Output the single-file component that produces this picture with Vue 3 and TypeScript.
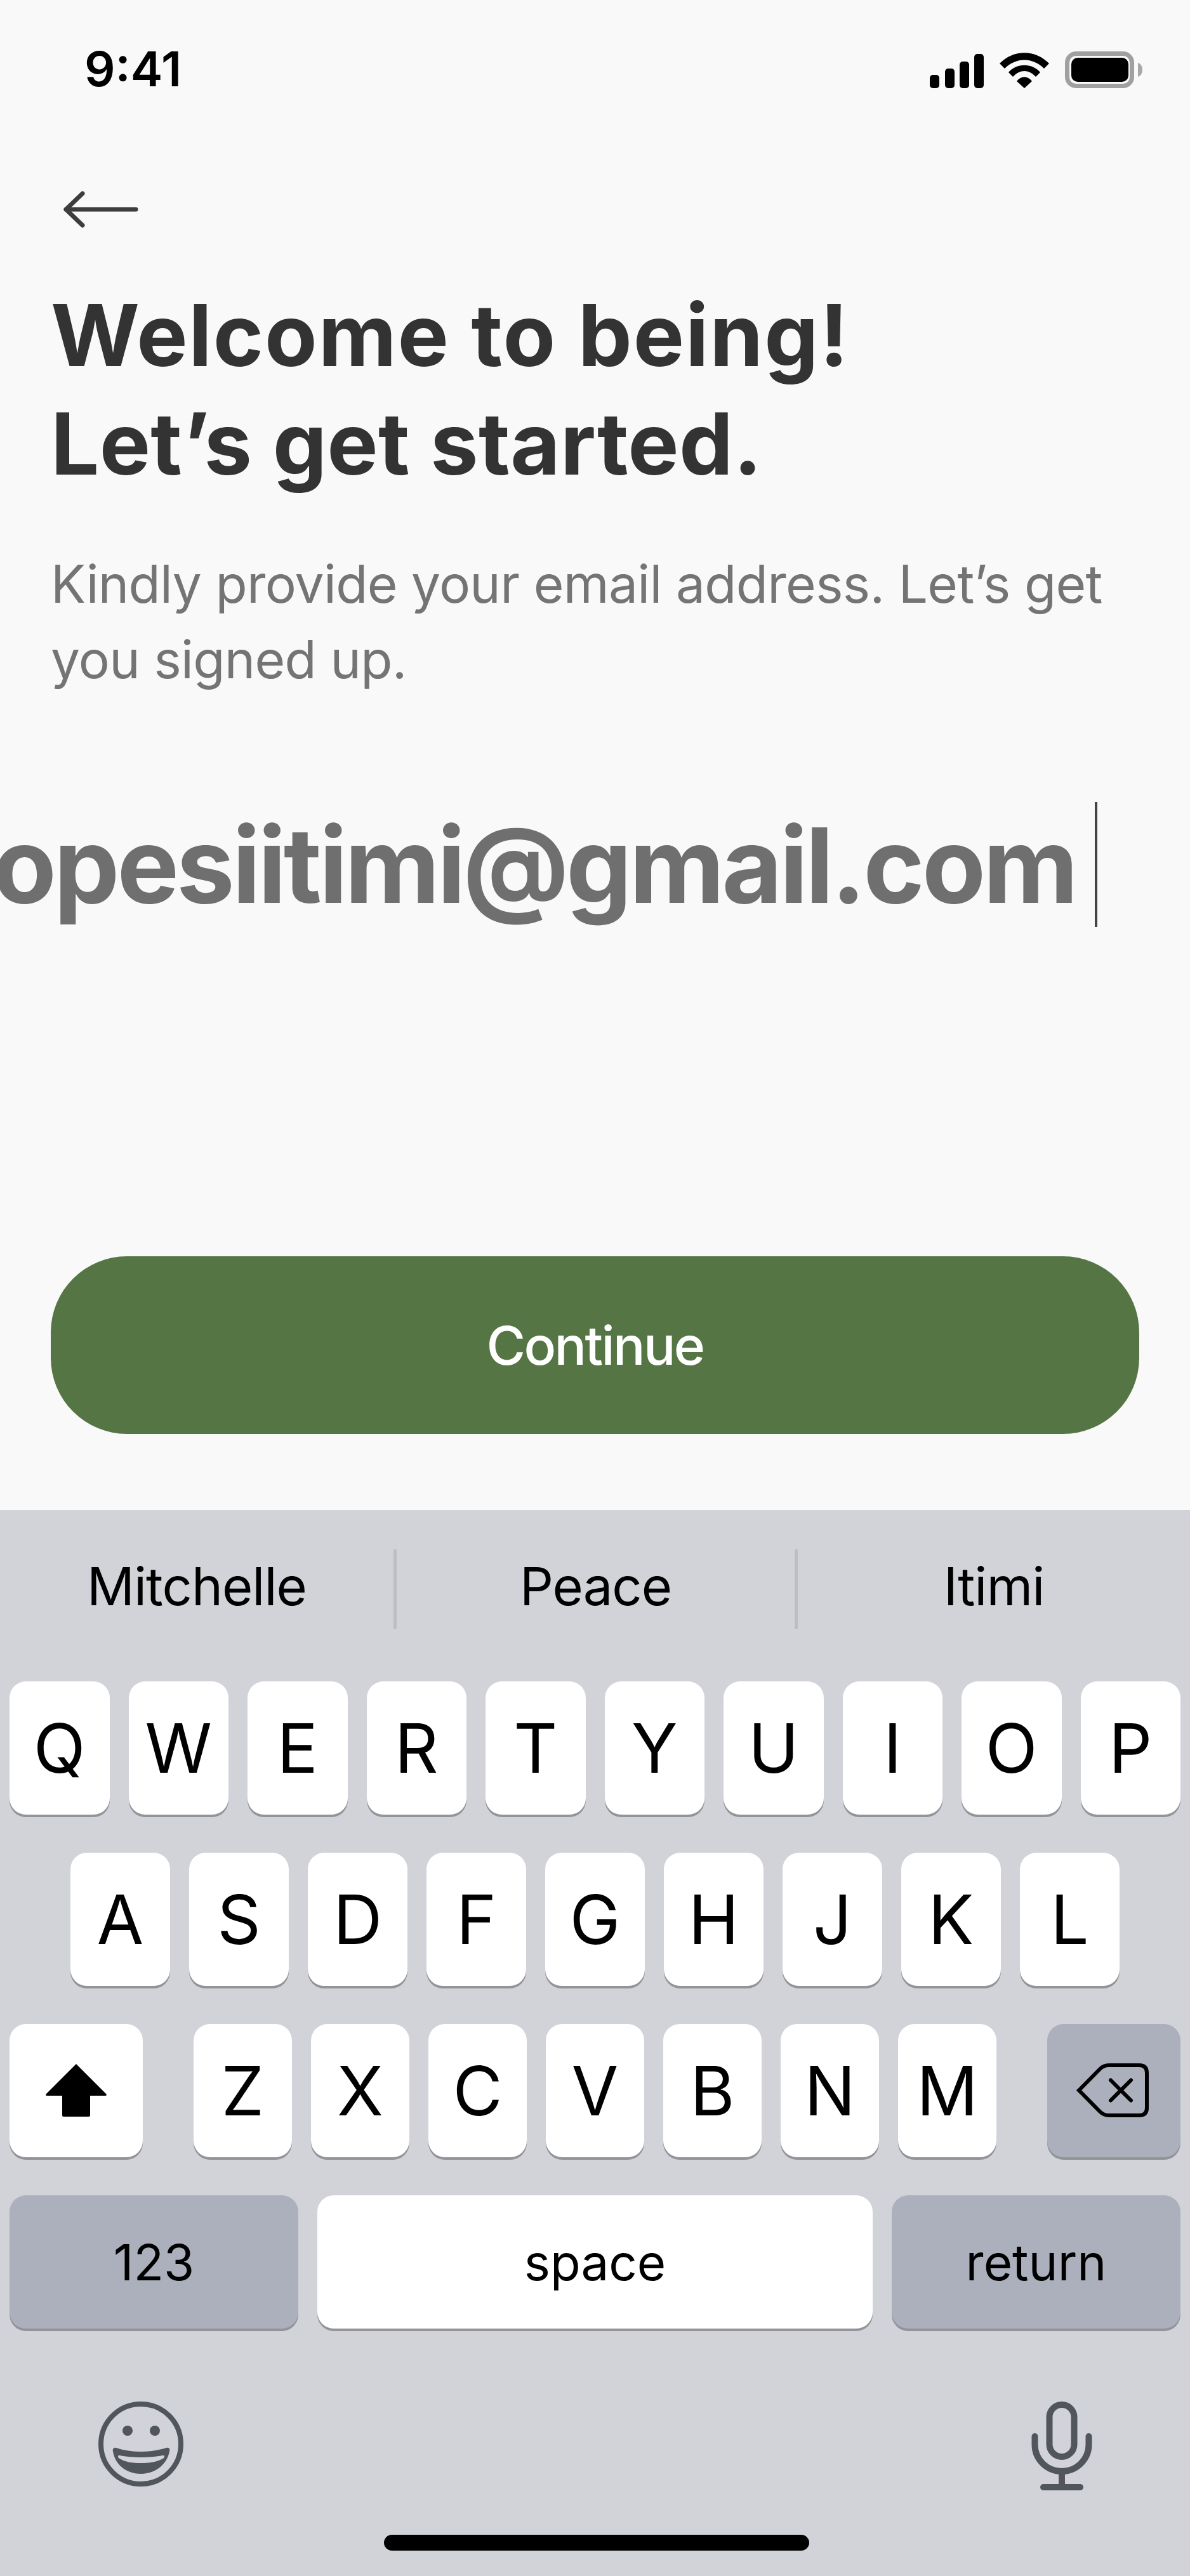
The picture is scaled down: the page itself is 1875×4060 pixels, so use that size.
<template>
  <div class="phone">
    <section class="screen">
      <!-- Status bar -->
      <div class="status-bar">
        <span class="time">9:41</span>
        <div class="status-icons">
          <svg width="85" height="54" viewBox="0 0 85 54" fill="#000">
            <rect x="0" y="33" width="15" height="21" rx="5" />
            <rect x="24" y="23" width="15" height="31" rx="5" />
            <rect x="47" y="12" width="15" height="42" rx="5" />
            <rect x="70" y="0" width="15" height="54" rx="5" />
          </svg>
          <svg width="78" height="56" viewBox="0 0 78 56" fill="#000">
            <path d="M0 17C22-5.500 56-5.500 78 17L70 25C52 7 26 7 8 25Z" />
            <path d="M14 31C27 16 51 16 64 31L57 38C46 26 32 26 21 38Z" />
            <path d="M27 45C34 36 44 36 51 45L39 56Z" />
          </svg>
          <svg width="122" height="58" viewBox="0 0 122 58">
            <rect x="3.500" y="3.500" width="102" height="51" rx="14" fill="none" stroke="#a0a0a0" stroke-width="7" />
            <rect x="10" y="10" width="90" height="38" rx="10" fill="#000" />
            <path d="M115 18C120 20 122 24 122 29C122 34 120 38 115 40Z" fill="#a8a8a8" />
          </svg>
        </div>
      </div>

      <!-- Back arrow -->
      <svg class="back-arrow" width="120" height="58" viewBox="0 0 120 58" fill="none" stroke="#3d3d3d" stroke-width="7" stroke-linecap="round" stroke-linejoin="round">
        <path d="M4 29H114" />
        <path d="M30 4L4 29L30 54" />
      </svg>

      <h1 class="title">Welcome to being!<br /><span class="title-second">Let’s get started.</span></h1>
      <p class="subtitle">Kindly provide your email address. Let’s get you signed up.</p>

      <!-- Email field, scrolled to the caret -->
      <div class="email-field">
        <span class="email-text">hopesiitimi@gmail.com</span>
        <span class="caret"></span>
      </div>

      <button class="continue-btn">Continue</button>
    </section>

    <section class="keyboard">
      <!-- Predictions -->
      <div class="suggestions">
        <span v-for="(word, index) in suggestions" :key="word" class="suggestion" :class="{ divided: index > 0 }">
          {{ word }}
        </span>
      </div>

      <div class="key-rows">
        <div class="key-row top-row">
          <div v-for="letter in topRow" :key="letter" class="key letter-key">{{ letter }}</div>
        </div>
        <div class="key-row middle-row">
          <div v-for="letter in middleRow" :key="letter" class="key letter-key">{{ letter }}</div>
        </div>
        <div class="key-row bottom-row">
          <div class="key shift-key">
            <svg width="96" height="84" viewBox="0 0 96 84" fill="#000">
              <path d="M48 0L95 47Q97 50 94 50H70V81Q70 83 68 83H28Q26 83 26 81V50H2Q-1 50 1 47Z" />
            </svg>
          </div>
          <div class="letters">
            <div v-for="letter in bottomRow" :key="letter" class="key letter-key">{{ letter }}</div>
          </div>
          <div class="key function-key delete-key">
            <svg width="120" height="92" viewBox="0 0 120 92" fill="none" stroke="#000" stroke-width="6" stroke-linecap="round">
              <path d="M5 45.500L38 12Q44 6 52 6H100Q112 6 112 18V73Q112 85 100 85H52Q44 85 38 79Z" />
              <path d="M55 29.500L87 61.500M87 29.500L55 61.500" />
            </svg>
          </div>
        </div>
        <div class="key-row action-row">
          <div class="key function-key wide-key label-key">123</div>
          <div class="key space-key label-key">space</div>
          <div class="key function-key wide-key label-key">return</div>
        </div>
      </div>

      <div class="system-icons">
        <svg width="140" height="140" viewBox="0 0 140 140">
          <circle cx="70" cy="70" r="63" fill="none" stroke="#51565c" stroke-width="8" />
          <circle cx="49" cy="49" r="8" fill="#51565c" />
          <circle cx="92" cy="49" r="8" fill="#51565c" />
          <path d="M31 76C55 84 85 84 110 76C115 75 116 78 115 82C110 105 90 117 70 117C50 117 30 105 26 82C25 78 27 75 31 76Z" fill="#51565c" />
          <path d="M37 88C55 92 85 92 104 88C107 87 108 90 106 92C95 99 82 100 70 100C58 100 45 99 35 92C33 90 34 87 37 88Z" fill="#d1d3d9" />
        </svg>
        <svg width="100" height="146" viewBox="0 0 100 146" fill="none" stroke="#51565c" stroke-width="10" stroke-linecap="round">
          <rect x="30.500" y="8" width="39" height="82" rx="19.500" />
          <path d="M7.500 58V71A42.500 42 0 0 0 92.500 71V58" />
          <path d="M50 113V138" />
          <path d="M21 138H79" />
        </svg>
      </div>

      <div class="home-indicator"></div>
    </section>
  </div>
</template>

<script setup lang="ts">
const suggestions: string[] = ['Mitchelle', 'Peace', 'Itimi'];
const topRow: string[] = ['Q', 'W', 'E', 'R', 'T', 'Y', 'U', 'I', 'O', 'P'];
const middleRow: string[] = ['A', 'S', 'D', 'F', 'G', 'H', 'J', 'K', 'L'];
const bottomRow: string[] = ['Z', 'X', 'C', 'V', 'B', 'N', 'M'];
</script>

<style>
html,
body {
  margin: 0;
  background: #f9f9f9;
}
</style>

<style scoped>
.phone {
  width: 1875px;
  height: 4060px;
  display: flex;
  flex-direction: column;
  overflow: hidden;
  font-family: Inter, "Liberation Sans", sans-serif;
}

/* Upper screen */
.screen {
  height: 2380px;
  flex: none;
  display: flex;
  flex-direction: column;
  background: #f9f9f9;
  box-sizing: border-box;
}

.status-bar {
  display: flex;
  justify-content: space-between;
  align-items: flex-start;
  padding: 81px 75px 0 133px;
  height: 220px;
  box-sizing: border-box;
}

.time {
  font-size: 76px;
  font-weight: 600;
  line-height: 54px;
  color: #000;
}

.status-icons {
  display: flex;
  align-items: flex-end;
  gap: 25px;
}

.back-arrow {
  margin: 81px 0 0 100px;
  flex: none;
}

.title {
  margin: 84px 0 0 80px;
  font-size: 135px;
  line-height: 171px;
  font-weight: 700;
  letter-spacing: 1.800px;
  color: #333;
}

.title-second {
  letter-spacing: 0.300px;
}

.subtitle {
  margin: 76px 80px 0;
  font-size: 82px;
  line-height: 119px;
  font-weight: 400;
  letter-spacing: -0.700px;
  color: #747474;
}

.email-field {
  display: flex;
  justify-content: flex-end;
  align-items: flex-start;
  margin-top: 165px;
  padding-right: 150px;
  white-space: nowrap;
}

.email-text {
  font-size: 164px;
  line-height: 200px;
  font-weight: 700;
  letter-spacing: -4px;
  color: #6f6f6f;
}

.caret {
  width: 4px;
  height: 197px;
  flex: none;
  margin: 0 -4px 0 30px;
  background: #444;
}

.continue-btn {
  width: 1715px;
  height: 280px;
  flex: none;
  margin: auto 0 120px 80px;
  border: none;
  border-radius: 120px;
  background: #567545;
  color: #fff;
  font-family: inherit;
  font-size: 84px;
  font-weight: 500;
  letter-spacing: -2.600px;
}

/* Keyboard */
.keyboard {
  flex: 1;
  display: flex;
  flex-direction: column;
  background: #d1d3d9;
}

.suggestions {
  height: 270px;
  flex: none;
  display: grid;
  grid-template-columns: 620px 632px 623px;
  align-items: center;
  padding-bottom: 22px;
  box-sizing: border-box;
}

.suggestion {
  height: 125px;
  text-align: center;
  font-size: 83px;
  line-height: 117px;
  letter-spacing: -1px;
  color: #000;
}

.suggestion.divided {
  border-left: 5px solid #bcbec4;
}

.key-rows {
  display: flex;
  flex-direction: column;
  gap: 60px;
  padding: 0 15px;
}

.key-row {
  display: flex;
  height: 210px;
  gap: 30px;
}

.middle-row {
  justify-content: center;
}

.middle-row .key {
  width: 157px;
  flex: none;
}

.top-row .key {
  flex: 1;
}

.bottom-row {
  justify-content: space-between;
  gap: 0;
}

.letters {
  display: flex;
  gap: 30px;
}

.letters .key {
  width: 155px;
}

.key {
  display: flex;
  align-items: center;
  justify-content: center;
  border-radius: 26px;
  background: #fff;
  box-shadow: 0 4px 0 #939499;
  color: #000;
}

.letter-key {
  font-size: 107px;
  line-height: 1;
}

.label-key {
  font-size: 78px;
}

.shift-key,
.delete-key {
  width: 210px;
}

.function-key {
  background: #abb0bc;
}

.wide-key {
  width: 455px;
  flex: none;
}

.space-key {
  flex: 1;
}

.system-icons {
  display: flex;
  justify-content: space-between;
  align-items: flex-start;
  margin-top: 112px;
  padding: 0 152px;
}

.home-indicator {
  width: 670px;
  height: 25px;
  margin: 67px 0 0 605px;
  border-radius: 13px;
  background: #000;
}
</style>
